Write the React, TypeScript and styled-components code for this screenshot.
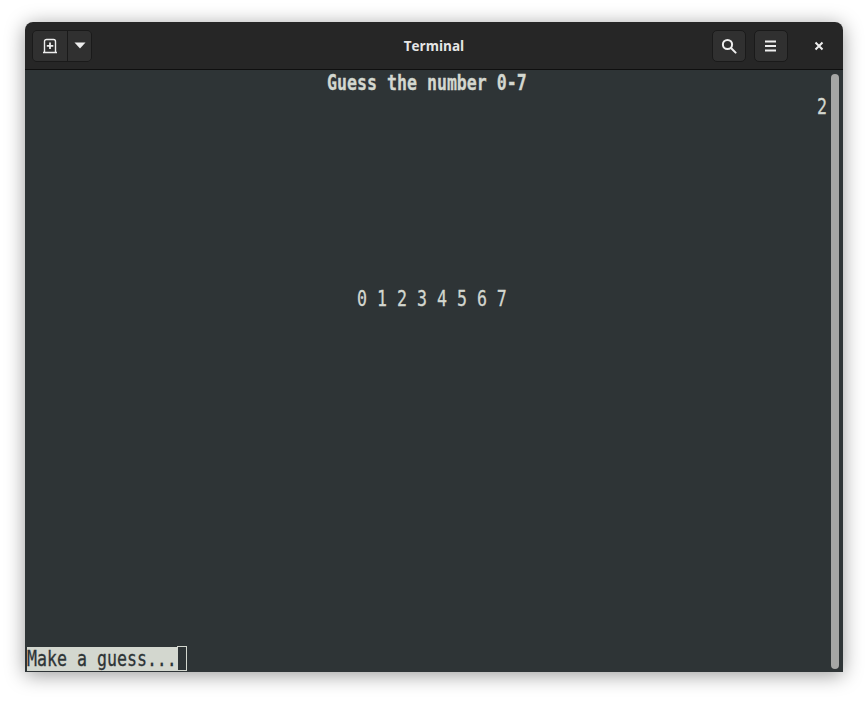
import { createGlobalStyle, styled } from "styled-components";

const GlobalStyle = createGlobalStyle`
  html, body {
    margin: 0;
    background: #fff;
  }
`;

const Page = styled.div`
  width: 868px;
  height: 701px;
  padding: 22px 25px 29px;
  box-sizing: border-box;
`;

const Window = styled.div`
  height: 100%;
  display: flex;
  flex-direction: column;
  border-radius: 8px 8px 0 0;
  overflow: hidden;
  box-shadow: 0 3px 20px rgba(0, 0, 0, 0.4);
`;

const HeaderBar = styled.header`
  flex: none;
  height: 47px;
  display: grid;
  grid-template-columns: 1fr auto 1fr;
  align-items: center;
  padding: 0 7px;
  background: #262626;
  border-bottom: 1px solid #0f0f0f;
`;

const HeaderSide = styled.div<{ $end?: boolean }>`
  display: flex;
  align-items: center;
  justify-content: ${(p) => (p.$end ? "flex-end" : "flex-start")};
  gap: 8px;
`;

const Title = styled.div`
  color: #e6e6e6;
  font: 700 13.5px "Open Sans", "Noto Sans", sans-serif;
`;

const ButtonGroup = styled.div`
  display: flex;
  height: 32px;
  border: 1px solid #1a1a1a;
  border-radius: 5px;
  overflow: hidden;
  box-sizing: border-box;
`;

const GroupButton = styled.div<{ $width: number }>`
  width: ${(p) => p.$width}px;
  display: flex;
  align-items: center;
  justify-content: center;
  background: #303030;
  & + & {
    border-left: 1px solid #1a1a1a;
  }
`;

const HeaderButton = styled.div`
  width: 34px;
  height: 32px;
  display: flex;
  align-items: center;
  justify-content: center;
  box-sizing: border-box;
  background: #303030;
  border: 1px solid #1a1a1a;
  border-radius: 5px;
`;

const CloseButton = styled(HeaderButton)`
  background: transparent;
  border-color: transparent;
  margin-left: 6px;
`;

const Terminal = styled.main`
  flex: 1;
  min-height: 0;
  display: flex;
  justify-content: space-between;
  padding: 1px 4px 0 2px;
  background: #2e3436;
`;

const Screen = styled.div`
  width: 800px;
  display: grid;
  grid-template-rows: repeat(25, 24px);
  font-family: "DejaVu Sans Mono", monospace;
  font-size: 16.6px;
  line-height: 24px;
  color: #d3d7cf;
  white-space: pre;
`;

const Row = styled.div<{ $row: number; $col: number }>`
  grid-row: ${(p) => p.$row + 1};
  padding-left: ${(p) => p.$col * 10}px;
  display: flex;
`;

const Chars = styled.span<{ $bold?: boolean; $inverse?: boolean }>`
  display: block;
  height: 24px;
  font-weight: ${(p) => (p.$bold ? 700 : 400)};
  color: ${(p) => (p.$inverse ? "#2e3436" : "#d3d7cf")};
  background: ${(p) => (p.$inverse ? "#d3d7cf" : "transparent")};
  -webkit-text-stroke: 0.25px currentColor;
  & > span {
    display: block;
    transform: translateY(1px) scaleY(1.3);
    transform-origin: 50% 52%;
  }
`;

const Cursor = styled.span`
  width: 10px;
  box-sizing: border-box;
  margin-top: -1px;
  height: 25px;
  border: 1px solid #d3d7cf;
`;

const Scrollbar = styled.div`
  width: 8px;
  margin: 3px 0;
  border-radius: 4px;
  background: #a5a6a5;
`;

const NewTabIcon = () => (
  <svg width="16" height="16" viewBox="0 0 16 16" fill="none" stroke="#eee">
    <path d="M2.5 14V3.5a2 2 0 0 1 2-2h7a2 2 0 0 1 2 2V14" strokeWidth="1.4" />
    <path d="M1 14.5h14" strokeWidth="1.4" />
    <path d="M8 4.5v6.5M4.8 7.8h6.5" strokeWidth="1.8" />
  </svg>
);

const ArrowIcon = () => (
  <svg width="12" height="7" viewBox="0 0 12 7">
    <path d="M0.5 0.5h11L6 6.5z" fill="#eee" />
  </svg>
);

const SearchIcon = () => (
  <svg width="16" height="16" viewBox="0 0 16 16" fill="none" stroke="#eee" strokeWidth="2">
    <circle cx="6.5" cy="6.5" r="4.6" />
    <path d="M10 10l4.6 4.6" strokeLinecap="round" />
  </svg>
);

const MenuIcon = () => (
  <svg width="12" height="12" viewBox="0 0 12 12" fill="#eee">
    <rect y="0.5" width="11" height="2" />
    <rect y="5" width="11" height="2" />
    <rect y="9.5" width="11" height="2" />
  </svg>
);

const CloseIcon = () => (
  <svg width="10" height="10" viewBox="0 0 10 10" stroke="#eee" strokeWidth="2">
    <path d="M1.5 1.5l7 7M8.5 1.5l-7 7" />
  </svg>
);

export default function App() {
  return (
    <Page>
      <GlobalStyle />
      <Window>
        <HeaderBar>
          <HeaderSide>
            <ButtonGroup>
              <GroupButton $width={34}>
                <NewTabIcon />
              </GroupButton>
              <GroupButton $width={23}>
                <ArrowIcon />
              </GroupButton>
            </ButtonGroup>
          </HeaderSide>
          <Title>Terminal</Title>
          <HeaderSide $end>
            <HeaderButton>
              <SearchIcon />
            </HeaderButton>
            <HeaderButton>
              <MenuIcon />
            </HeaderButton>
            <CloseButton>
              <CloseIcon />
            </CloseButton>
          </HeaderSide>
        </HeaderBar>
        <Terminal>
          <Screen>
            <Row $row={0} $col={30}>
              <Chars $bold>
                <span>Guess the number 0-7</span>
              </Chars>
            </Row>
            <Row $row={1} $col={79}>
              <Chars>
                <span>2</span>
              </Chars>
            </Row>
            <Row $row={9} $col={33}>
              <Chars>
                <span>0 1 2 3 4 5 6 7</span>
              </Chars>
            </Row>
            <Row $row={24} $col={0}>
              <Chars $inverse>
                <span>Make a guess...</span>
              </Chars>
              <Cursor />
            </Row>
          </Screen>
          <Scrollbar />
        </Terminal>
      </Window>
    </Page>
  );
}
